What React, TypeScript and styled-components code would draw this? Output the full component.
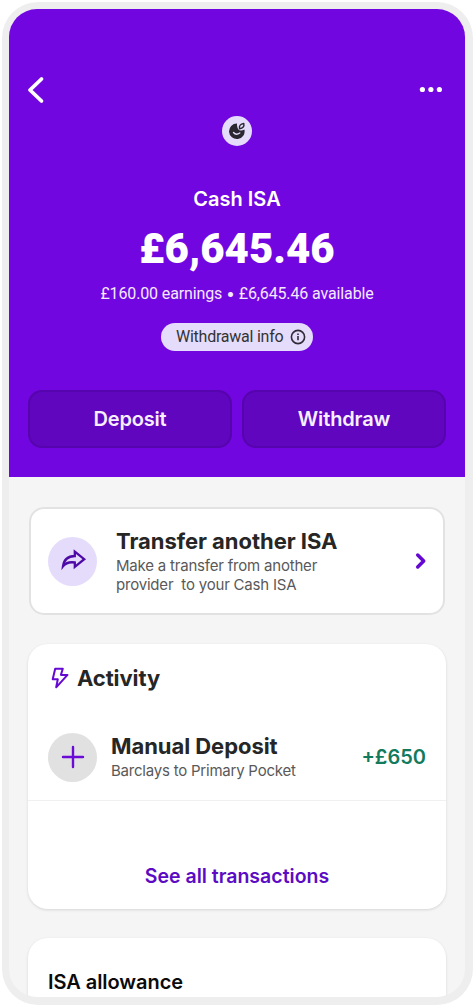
import React from 'react';
import styled, { createGlobalStyle } from 'styled-components';

const GlobalStyle = createGlobalStyle`
  * { box-sizing: border-box; }
  html, body { margin: 0; background: #fff; }
  body { font-family: Inter, "Liberation Sans", sans-serif; color: #262626; overflow: hidden; }
  button { font-family: inherit; margin: 0; padding: 0; border: 0; background: none; }
  svg { display: block; flex: none; }
`;

const Page = styled.div`
  width: 474px;
  height: 1006px;
  padding: 2px 1px 1px 2px;
`;

const Device = styled.main`
  height: 100%;
  padding: 7px 8px 8px 7px;
  background: #eeeeee;
  border-radius: 36px;
`;

const Screen = styled.div`
  height: 100%;
  overflow: hidden;
  background: #f5f5f5;
  border-radius: 28px;
`;

const Hero = styled.header`
  height: 468px;
  background: #7206e0;
  color: #fff;
  display: flex;
  flex-direction: column;
  align-items: center;
`;

const TopBar = styled.nav`
  align-self: stretch;
  display: flex;
  justify-content: space-between;
  align-items: flex-start;
  padding: 67px 22px 0 18px;
  height: 107px;
`;

const Badge = styled.div`
  width: 30px;
  height: 30px;
  border-radius: 50%;
  background: #e5dcfc;
  display: grid;
  place-items: center;
`;

interface TextProps {
  $size: number;
  $line: number;
  $weight?: number;
  $spacing?: number;
  $top?: number;
  $color?: string;
}

const Text = styled.div<TextProps>`
  font-size: ${p => p.$size}px;
  line-height: ${p => p.$line}px;
  font-weight: ${p => p.$weight ?? 400};
  letter-spacing: ${p => p.$spacing ?? 0}px;
  margin: ${p => p.$top ?? 0}px 0 0;
  color: ${p => p.$color ?? 'inherit'};
  white-space: pre;
`;

const HeroText = styled(Text)`
  font-family: Roboto, "Liberation Sans", sans-serif;
`;

const Bullet = styled.span`
  font-family: Inter, sans-serif;
  line-height: 1;
`;

const InfoPill = styled.button`
  width: 152px;
  height: 28px;
  margin-top: 18px;
  padding: 0 7px 0 15px;
  border-radius: 14px;
  background: #e5dcfc;
  color: #333;
  display: flex;
  align-items: center;
  justify-content: space-between;
`;

const Actions = styled.div`
  align-self: stretch;
  display: grid;
  grid-template-columns: 1fr 1fr;
  gap: 10px;
  margin: 39px 19px 0;
`;

const ActionButton = styled.button`
  height: 58px;
  border: 2px solid #5604ad;
  border-radius: 14px;
  background: #6006bf;
  color: #f7efff;
  display: grid;
  place-items: center;
`;

const TransferCard = styled.section`
  height: 108px;
  margin: 30px 20px 0;
  padding: 0 16px 0 17px;
  border: 2px solid #e2e2e2;
  border-radius: 15px;
  background: #fff;
  display: flex;
  align-items: center;
`;

const IconCircle = styled.div<{ $bg: string }>`
  width: 49px;
  height: 49px;
  border-radius: 50%;
  background: ${p => p.$bg};
  display: grid;
  place-items: center;
  flex: none;
`;

const Copy = styled.div<{ $gap: number }>`
  flex: 1;
  padding-left: ${p => p.$gap}px;
`;

const Card = styled.section<{ $top: number; $height: number }>`
  height: ${p => p.$height}px;
  margin: ${p => p.$top}px 19px 0;
  border-radius: 20px;
  background: #fff;
  box-shadow: 0 1px 3px rgba(0, 0, 0, 0.13);
`;

const CardHeading = styled.div`
  height: 68px;
  padding-left: 23px;
  display: flex;
  align-items: center;
  gap: 8px;
`;

const Transaction = styled.div`
  height: 89px;
  padding: 2px 20px 0;
  border-bottom: 1px solid #f0f0f0;
  display: flex;
  align-items: center;
`;

const CardFooter = styled.div`
  height: 108px;
  padding-top: 62px;
  display: flex;
  justify-content: center;
`;

const AllowanceBody = styled.div`
  padding: 31px 20px 0;
`;

export default function App() {
  return (
    <Page>
      <GlobalStyle />
      <Device>
        <Screen>
          <Hero>
            <TopBar>
              <svg width="18" height="28" viewBox="0 0 18 28" fill="none" stroke="#fff" strokeWidth="3.800" strokeLinecap="round" strokeLinejoin="round">
                <path d="M14.500 3L3 14l11.500 11" />
              </svg>
              <svg width="24" height="28" viewBox="0 0 24 28" fill="#fff">
                <circle cx="3.400" cy="13.500" r="2.600" />
                <circle cx="11.900" cy="13.500" r="2.600" />
                <circle cx="20.400" cy="13.500" r="2.600" />
              </svg>
            </TopBar>
            <Badge>
              <svg width="18" height="18" viewBox="0 0 18 18" fill="none">
                <path d="M9 1.500A7.800 7.800 0 1 0 16.400 7.500Q13.700 9.300 11.300 8.200Q8.800 6.600 9 1.500Z" fill="#2b2730" />
                <path d="M11.500 6.700Q10.700 2.200 15.800 1.500Q16.800 5.800 11.500 6.700Z" stroke="#2b2730" strokeWidth="1.400" strokeLinejoin="round" />
                <path d="M5.500 10.500Q8 13.700 11.800 11" stroke="#e5dcfc" strokeWidth="1.300" strokeLinecap="round" />
              </svg>
            </Badge>
            <Text $size={20} $line={26} $weight={600} $top={40}>Cash ISA</Text>
            <HeroText $size={42} $line={48} $weight={900} $top={13}>£6,645.46</HeroText>
            <HeroText $size={16} $line={22} $top={10} $spacing={-0.13} $color="#f5e9ff">£160.00 earnings <Bullet>•</Bullet> £6,645.46 available</HeroText>
            <InfoPill>
              <HeroText as="span" $size={16} $line={22} $spacing={-0.24}>Withdrawal info</HeroText>
              <svg width="16" height="16" viewBox="0 0 16 16" fill="none" stroke="#302a38" strokeWidth="1.600">
                <circle cx="8" cy="8" r="6.600" />
                <path d="M8 7v4.300M8 4.400v1.600" />
              </svg>
            </InfoPill>
            <Actions>
              <ActionButton><Text as="span" $size={20} $line={26} $weight={600} $spacing={-0.2}>Deposit</Text></ActionButton>
              <ActionButton><Text as="span" $size={20} $line={26} $weight={600} $spacing={-0.15}>Withdraw</Text></ActionButton>
            </Actions>
          </Hero>

          <TransferCard>
            <IconCircle $bg="#e5dcfc">
              <svg width="28" height="24" viewBox="0 0 28 24" fill="none" stroke="#4d0aa6" strokeWidth="2.300" strokeLinejoin="miter">
                <path d="M15.800 2.600L25.200 10.200L15.800 17.800V13.500Q8 12.300 4 17.300Q5.300 7.200 15.800 7Z" />
              </svg>
            </IconCircle>
            <Copy $gap={19}>
              <Text $size={22} $line={27} $weight={700} $spacing={-0.04}>Transfer another ISA</Text>
              <Text $size={15} $line={19.500} $top={1} $color="#595959" $spacing={-0.2}>{'Make a transfer from another\nprovider  to your Cash ISA'}</Text>
            </Copy>
            <svg width="12" height="18" viewBox="0 0 12 18" fill="none" stroke="#6508d1" strokeWidth="3.500" strokeLinecap="round" strokeLinejoin="round">
              <path d="M2.700 3L8.700 9l-6 6" />
            </svg>
          </TransferCard>

          <Card $top={29} $height={265}>
            <CardHeading>
              <svg width="18" height="22" viewBox="0 0 18 22" fill="none" stroke="#6508d1" strokeWidth="2" strokeLinejoin="round">
                <path d="M4.200 1.700H11.800L9.900 7.900H16.500L5.200 20.300L6.800 12.200H1.700Z" />
              </svg>
              <Text as="h2" $size={22} $line={28} $weight={700} $spacing={-0.1}>Activity</Text>
            </CardHeading>
            <Transaction>
              <IconCircle $bg="#e1e1e1">
                <svg width="24" height="24" viewBox="0 0 24 24" stroke="#6b0bd6" strokeWidth="2.400" strokeLinecap="round">
                  <path d="M12 2v20M2 12h20" />
                </svg>
              </IconCircle>
              <Copy $gap={14}>
                <Text $size={22} $line={27} $weight={700} $spacing={-0.05}>Manual Deposit</Text>
                <Text $size={15} $line={20} $top={1} $color="#595959" $spacing={-0.22}>Barclays to Primary Pocket</Text>
              </Copy>
              <Text $size={20} $line={26} $weight={600} $color="#137a5c">+£650</Text>
            </Transaction>
            <CardFooter>
              <Text as="span" $size={19.500} $line={26} $weight={600} $color="#5c0bc4">See all transactions</Text>
            </CardFooter>
          </Card>

          <Card $top={29} $height={120}>
            <AllowanceBody>
              <Text as="h2" $size={20} $line={26} $weight={600} $color="#0b0b0b" $spacing={-0.05}>ISA allowance</Text>
            </AllowanceBody>
          </Card>
        </Screen>
      </Device>
    </Page>
  );
}
